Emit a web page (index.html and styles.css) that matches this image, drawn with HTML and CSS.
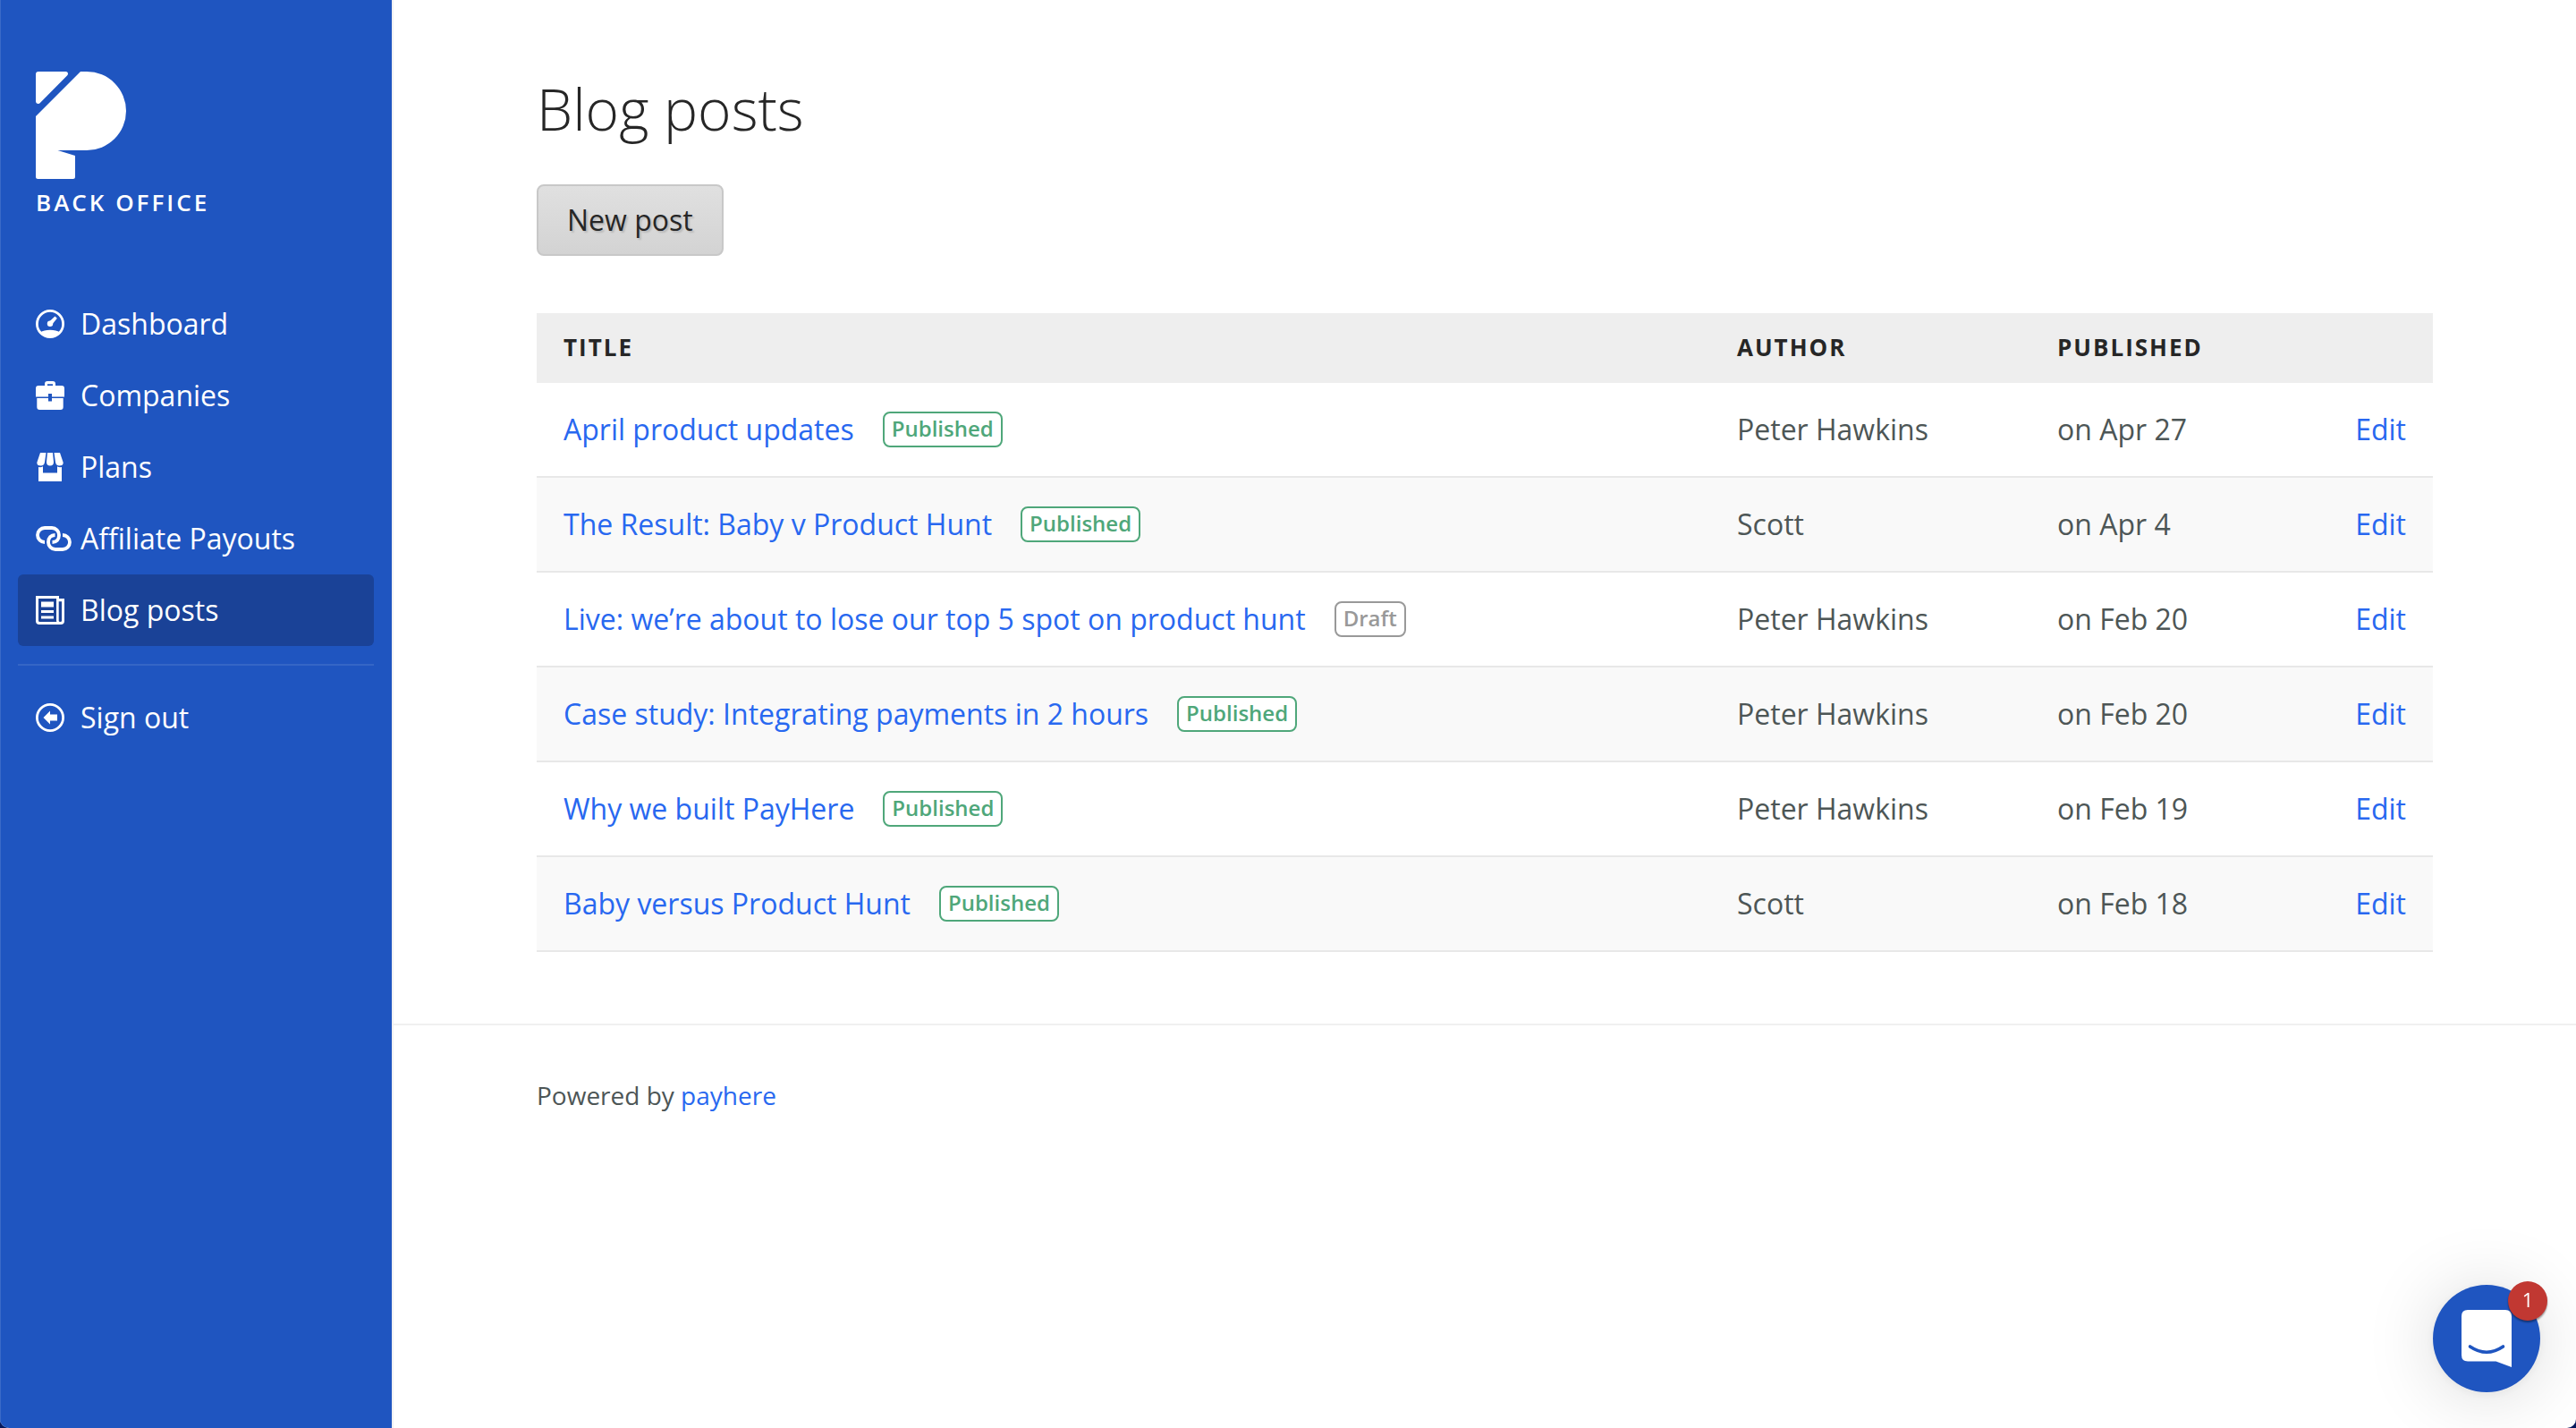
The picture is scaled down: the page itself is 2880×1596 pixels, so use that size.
FILE: index.html
```html
<!DOCTYPE html>
<html lang="en">
<head>
<meta charset="utf-8">
<title>Blog posts – Back Office</title>
<link rel="stylesheet" href="styles.css">
</head>
<body>
<div class="app">
  <aside class="sidebar">
    <a class="brand" href="#">
      <svg class="brand-logo" viewBox="0 0 101 120" aria-hidden="true"><path d="M3 0H33.500Q36 0 36 2.500Q36 3.500 35 4.500L4.800 35Q4 36 3 36Q0 36 0 33V3Q0 0 3 0ZM50 0H57A44 44 0 0 1 57 88H24.500L44 94V117.500Q44 120 41.500 120H2.500Q0 120 0 117.500V50Z"/></svg>
      <span class="brand-name">BACK OFFICE</span>
    </a>
    <nav class="nav">
      <a class="nav-item" href="#"><span class="nav-icon"><svg viewBox="0 0 32 32" width="32" height="32"><circle cx="16" cy="16" r="14.6" fill="none" stroke="#fff" stroke-width="2.800"/><path d="M5 25.500Q9 22.700 16 22.700T27 25.500Q23 31 16 31T5 25.500Z"/><circle cx="16" cy="15.800" r="3.200"/><path d="M14.500 14L21.500 7.500L23.800 9.800L18 17Z"/></svg></span>Dashboard</a>
      <a class="nav-item" href="#"><span class="nav-icon"><svg viewBox="0 0 32 32" width="32" height="32"><path fill-rule="evenodd" d="M10 5V3Q10 0 13 0H19Q22 0 22 3V5H29Q32 5 32 8V17.600H18V14H14V17.600H0V8Q0 5 3 5ZM13 5H19V3.200H13ZM1.300 19H14V22.500H18V19H30.700V29Q30.700 32 27.700 32H4.300Q1.300 32 1.300 29Z"/></svg></span>Companies</a>
      <a class="nav-item" href="#"><span class="nav-icon"><svg viewBox="0 0 32 32" width="32" height="32"><path d="M5 0H11.500L10 10.500Q9.500 14.500 5.500 14.500Q1.300 14.500 1.300 11ZM13 0H19L20 10.500Q20 14.500 16 14.500T12 10.500ZM20.500 0H27L30.700 11Q30.700 14.500 26.500 14.500Q22.500 14.500 22 10.500ZM3 16Q6 16.500 8 15.200V22.500H24V15.200Q26 16.500 29 16V32H3Z"/></svg></span>Plans</a>
      <a class="nav-item" href="#"><span class="nav-icon"><svg viewBox="0 0 40 28" width="40" height="28"><path d="M10 18A8 8 0 0 1 10 2H18A8 8 0 0 1 26 10C26 15 23 18 18.500 18M21.500 10C17 10 14 13 14 18A8 8 0 0 0 22 26H30A8 8 0 0 0 30 10" fill="none" stroke="#fff" stroke-width="3.800"/></svg></span>Affiliate Payouts</a>
      <a class="nav-item active" href="#" aria-current="page"><span class="nav-icon"><svg viewBox="0 0 32 32" width="32" height="32"><path fill-rule="evenodd" d="M0 0H26V3H32V28Q32 32 28 32H4Q0 32 0 28ZM3 3V27.500Q3 29 4.500 29H23.500Q23 28.500 23 27.500V3ZM25.700 6.200V28Q25.700 29 27.300 29T29 28V6.200Z"/><path d="M6 6.500H20V12.500H6ZM6 16H20V19H6ZM6 22.500H20V25.500H6Z"/></svg></span>Blog posts</a>
      <hr class="nav-divider">
      <a class="nav-item" href="#"><span class="nav-icon"><svg viewBox="0 0 32 32" width="32" height="32"><circle cx="16" cy="16" r="14.600" fill="none" stroke="#fff" stroke-width="2.800"/><path d="M8.500 16L16 8.500V12.500H24V19.500H16V23.500Z"/></svg></span>Sign out</a>
    </nav>
  </aside>
  <div class="page">
    <main class="content">
      <h1 class="title">Blog posts</h1>
      <button class="button" type="button">New post</button>
      <table class="posts">
        <colgroup><col><col class="col-author"><col class="col-date"><col class="col-edit"></colgroup>
        <thead>
          <tr><th scope="col">TITLE</th><th scope="col">AUTHOR</th><th scope="col">PUBLISHED</th><td></td></tr>
        </thead>
        <tbody>
          <tr><td><div class="post"><a href="#">April product updates</a><span class="tag">Published</span></div></td><td>Peter Hawkins</td><td>on Apr 27</td><td class="edit"><a href="#">Edit</a></td></tr>
          <tr><td><div class="post"><a href="#">The Result: Baby v Product Hunt</a><span class="tag">Published</span></div></td><td>Scott</td><td>on Apr 4</td><td class="edit"><a href="#">Edit</a></td></tr>
          <tr><td><div class="post"><a href="#">Live: we’re about to lose our top 5 spot on product hunt</a><span class="tag draft">Draft</span></div></td><td>Peter Hawkins</td><td>on Feb 20</td><td class="edit"><a href="#">Edit</a></td></tr>
          <tr><td><div class="post"><a href="#">Case study: Integrating payments in 2 hours</a><span class="tag">Published</span></div></td><td>Peter Hawkins</td><td>on Feb 20</td><td class="edit"><a href="#">Edit</a></td></tr>
          <tr><td><div class="post"><a href="#">Why we built PayHere</a><span class="tag">Published</span></div></td><td>Peter Hawkins</td><td>on Feb 19</td><td class="edit"><a href="#">Edit</a></td></tr>
          <tr><td><div class="post"><a href="#">Baby versus Product Hunt</a><span class="tag">Published</span></div></td><td>Scott</td><td>on Feb 18</td><td class="edit"><a href="#">Edit</a></td></tr>
        </tbody>
      </table>
    </main>
    <footer class="footer">Powered by <a href="#">payhere</a></footer>
  </div>
</div>
<button class="chat" type="button" aria-label="Open chat, 1 unread message">
  <svg viewBox="0 0 56 64" width="56" height="64" aria-hidden="true"><path fill="#fff" d="M7 0H49Q56 0 56 7V64L38.500 57.500H7Q0 57.500 0 50.500V7Q0 0 7 0Z"/><path d="M9.500 41Q28 53.500 46.500 41" fill="none" stroke="#1f55c0" stroke-width="3.600" stroke-linecap="round"/></svg>
  <span class="chat-count">1</span>
</button>
</body>
</html>
```
FILE: styles.css
```css
* {
  box-sizing: border-box;
}

html {
  background: #05185c;
}

body {
  margin: 0;
  font-family: "Open Sans", sans-serif;
  font-size: 32px;
  line-height: 48px;
  color: #4d5656;
}

a {
  color: #2868f0;
  text-decoration: none;
}

.app {
  display: flex;
  min-height: 100vh;
  overflow: hidden;
  border-radius: 0 0 10px 10px;
  background: #fff;
}

/* Sidebar */
.sidebar {
  flex: none;
  width: 440px;
  padding: 80px 20px 40px 19px;
  border-left: 1px solid #3b6ac8;
  border-right: 2px solid #f0f0f2;
  background: #1f55c0;
}

.brand {
  display: flex;
  flex-direction: column;
  gap: 8px;
  padding: 0 20px;
  color: #fff;
}

.brand-logo {
  width: 101px;
  height: 120px;
  fill: #fff;
}

.brand-name {
  font-size: 26px;
  line-height: 36px;
  font-weight: 600;
  letter-spacing: 3px;
}

.nav {
  display: flex;
  flex-direction: column;
  margin-top: 78px;
}

.nav-item {
  display: flex;
  align-items: center;
  height: 80px;
  padding: 0 20px;
  border-radius: 6px;
  color: #fff;
}

.nav-item.active {
  background: #1a4297;
}

.nav-icon {
  display: flex;
  flex: none;
  width: 50px;
  fill: #fff;
}

.nav-divider {
  width: 100%;
  height: 2px;
  margin: 20px 0 18px;
  border: 0;
  background: #3566c6;
}

/* Page */
.page {
  flex: 1;
  min-width: 0;
}

.content {
  padding: 80px 160px;
}

.title {
  margin: 0 0 42px;
  font-size: 64px;
  line-height: 84px;
  font-weight: 300;
  color: #262626;
}

.button {
  display: block;
  height: 80px;
  padding: 0 32px;
  border: 2px solid #c8c8c8;
  border-radius: 8px;
  background: linear-gradient(#e0e0e0, #d3d3d3);
  font: inherit;
  color: #262626;
  text-shadow: 2px 2px 2px rgba(0, 0, 0, 0.15);
}

.posts {
  width: 100%;
  margin-top: 64px;
  border-spacing: 0;
  table-layout: fixed;
}

.col-author {
  width: 358px;
}

.col-date {
  width: 300px;
}

.col-edit {
  width: 150px;
}

.posts th,
.posts td {
  padding: 0 30px;
  text-align: left;
}

.posts thead tr {
  height: 78px;
  background: #eee;
}

.posts th {
  padding-bottom: 2px;
  font-size: 26px;
  font-weight: 700;
  letter-spacing: 2px;
  color: #262626;
}

.posts tbody tr:nth-child(even) {
  background: #f9f9f9;
}

.posts tbody td {
  height: 106px;
  border-bottom: 2px solid #e8e8e8;
}

.posts .edit {
  text-align: right;
}

.post {
  display: flex;
  align-items: center;
  gap: 32px;
}

.tag {
  height: 40px;
  padding: 0 8px;
  border: 2px solid #4fa77a;
  border-radius: 8px;
  background: #fff;
  font-size: 24px;
  line-height: 34px;
  font-weight: 600;
  color: #4fa77a;
}

.tag.draft {
  border-color: #999;
  color: #999;
}

.footer {
  padding: 54px 160px;
  border-top: 2px solid #f0f0f0;
  font-size: 28px;
}

/* Chat launcher */
.chat {
  position: fixed;
  right: 40px;
  bottom: 40px;
  display: flex;
  align-items: center;
  justify-content: center;
  width: 120px;
  height: 120px;
  padding: 0;
  border: 0;
  border-radius: 50%;
  background: #1f55c0;
  box-shadow: 0 2px 12px rgba(0, 0, 0, 0.06), 0 4px 80px rgba(0, 0, 0, 0.15);
}

.chat-count {
  position: absolute;
  top: -4px;
  right: -8px;
  width: 44px;
  height: 44px;
  border-radius: 50%;
  background: #c13832;
  box-shadow: 0 2px 2px rgba(0, 0, 0, 0.4);
  font-family: "Open Sans", sans-serif;
  font-size: 22px;
  line-height: 40px;
  color: #fff;
}
```
